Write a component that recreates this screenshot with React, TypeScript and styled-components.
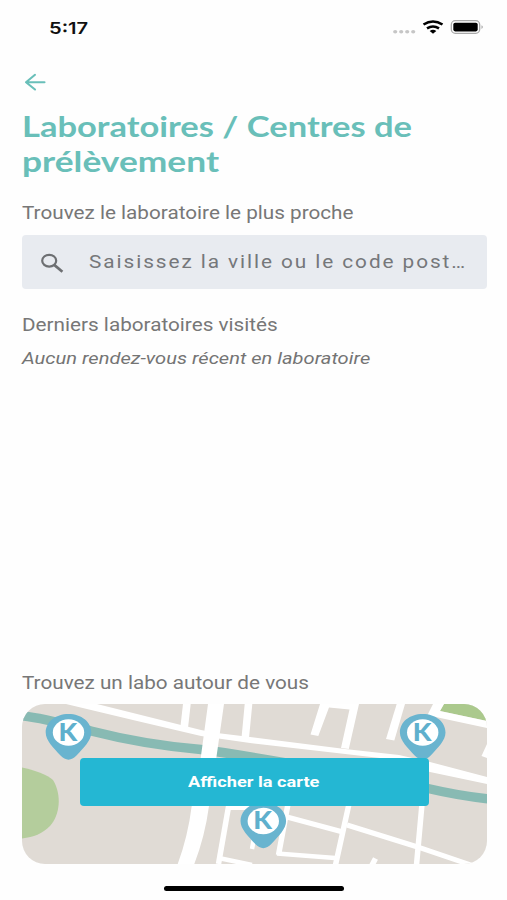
import React from "react";
import styled, { createGlobalStyle } from "styled-components";

const GlobalStyle = createGlobalStyle`
  * { box-sizing: border-box; }
  body { margin: 0; background: #fefefe; font-family: Roboto, "Liberation Sans", sans-serif; }
`;

const Screen = styled.main`
  display: flex;
  flex-direction: column;
  width: 507px;
  height: 900px;
  overflow: hidden;
  background: #fefefe;
`;

const StatusBar = styled.header`
  display: flex;
  justify-content: space-between;
  align-items: center;
  height: 54px;
  padding: 0 23px 0 49px;
`;

/* The typeface is rendered wide, by a factor that each text sets. */
const Wide = styled.span<{ $scale: number }>`
  display: block;
  width: max-content;
  white-space: nowrap;
  transform: scaleX(${(p) => p.$scale});
  transform-origin: left center;
`;

const Clock = styled(Wide)`
  padding-top: 1px;
  font: 600 16.5px/20px Inter, sans-serif;
  color: #111;
`;

const StatusIcons = styled.svg`
  display: block;
  width: 92px;
  height: 20px;
`;

const Content = styled.div`
  display: flex;
  flex: 1;
  flex-direction: column;
  padding: 0 20.5px 0 22px;
`;

const BackButton = styled.button`
  display: block;
  width: 26px;
  height: 20px;
  margin: 18px 0 0;
  padding: 0;
  border: 0;
  background: none;
  svg { display: block; }
`;

const Title = styled.h1`
  margin: 17px 0 0;
  font: 700 28px/35px Lato, sans-serif;
  color: #69bfb9;
`;

const Label = styled.p<{ $top?: number }>`
  margin: ${(p) => p.$top ?? 0}px 0 0;
  font-size: 17.5px;
  line-height: 22px;
  color: #777;
`;

const EmptyNote = styled.p`
  margin: 12px 0 0;
  font-size: 16.5px;
  font-style: italic;
  line-height: 22px;
  color: #747474;
`;

const SearchField = styled.div`
  display: flex;
  align-items: center;
  height: 54px;
  margin-top: 11px;
  padding-left: 18px;
  border-radius: 4px;
  background: #e8ebf0;
  color: #75777a;
  font-size: 17.5px;
  line-height: 22px;
  letter-spacing: 1.63px;
  svg { display: block; margin: 2px 25px 0 0; }
`;

const MapSection = styled.section`
  margin-top: auto;
`;

const MapCard = styled.div`
  display: grid;
  width: 464.5px;
  height: 159.5px;
  margin-top: 10px;
  overflow: hidden;
  border-radius: 23px;
  background: #e0dbd5;
  > * { grid-area: 1 / 1; }
`;

const MapDrawing = styled.svg`
  display: block;
  width: 464.5px;
  height: 159.5px;
`;

const MapButton = styled.button`
  display: flex;
  align-items: center;
  z-index: 1;
  width: 348.5px;
  height: 48px;
  margin: 54px 0 0 58px;
  padding: 0 0 0 108px;
  border: 0;
  border-radius: 4px;
  background: #24b7d3;
  color: #fff;
  font: 700 15px/20px Roboto, sans-serif;
`;

const BottomBar = styled.footer`
  display: flex;
  justify-content: center;
  height: 36.5px;
  padding-top: 22.5px;
`;

const HomeIndicator = styled.div`
  width: 180px;
  height: 5px;
  border-radius: 3px;
  background: #000;
`;

function Pin({ x, y }: { x: number; y: number }) {
  return (
    <g transform={`translate(${x} ${y})`}>
      <path
        d="M0 -18.500C13 -18.500 22.800 -10.500 22.800 0C22.800 8 15 15.500 8 23C3 28.500 -3 28.500 -8 23C-15 15.500 -22.800 8 -22.800 0C-22.800 -10.500 -13 -18.500 0 -18.500Z"
        fill="#69b4cf"
      />
      <ellipse rx="15.700" ry="13.200" fill="#fff" />
      <text
        transform="scale(1.1 1)"
        x="-0.600"
        y="8.200"
        textAnchor="middle"
        fontFamily="Lato, sans-serif"
        fontWeight="900"
        fontSize="24.500"
        fill="#5fb0cd"
      >
        K
      </text>
    </g>
  );
}

function CityMap() {
  return (
    <MapDrawing viewBox="22 704 464.5 159.5">
      <path d="M22 767.500C34 770 48 775 53 780C62 795 60 815 50 826C42 834 34 837 22 838.500Z" fill="#b4cd9c" />
      <path d="M440 711L444 704H487V721Z" fill="#abc98d" />
      <path
        d="M20 715.500C45 718 68 725 91 731C130 741 160 746 201 749.500C260 757 350 774 428 788.500Q460 796 490 799"
        fill="none"
        stroke="#88bab3"
        strokeWidth="9.500"
      />
      <g fill="#fff">
        <path d="M66 704H97L201 730L217 733L250 737L345 749L399 755L430 762L487 777V784L430 772L380 758L250 743L201 736L135 720.500Z" />
        <path d="M183 704H190.700L188 728L180.500 726Z" />
        <path d="M208 704H224L216.300 758L209 806Q205 836 194.300 864H177.700Q188 836 191.700 806L200.700 758Z" />
        <path d="M244.700 704H252.300L249 738H241.500Z" />
        <path d="M320 704H359L348.800 749L341 748L349.500 709.500L329 707.500L318.300 736L310.500 734.500Z" />
        <path d="M396.700 704H405L394.300 740.500L386 739Z" />
        <path d="M433 704H444L440 711L487 721V728L431 716L424 722Z" />
        <path d="M487 744L481.500 756L487 758Z" />
      </g>
      <g fill="none" stroke="#fff" strokeWidth="5.500">
        <path d="M229 804L218.500 864" />
        <path d="M229 807.500H252" strokeWidth="5" />
        <path d="M221 858.500L252 865M254 838L252 849M277 853.500L335 858" strokeWidth="4.500" />
        <path d="M288 804L278.500 855M349 804L335.500 865M422 804L416.500 865" />
        <path d="M287 817L341 831.500M347 825L416 846.500L474 866" strokeWidth="5" />
        <path d="M375.500 858.500L371 867" />
      </g>
      <Pin x={68.500} y={732.500} />
      <Pin x={422.700} y={732.500} />
      <Pin x={263.300} y={821} />
    </MapDrawing>
  );
}

export default function App() {
  return (
    <Screen>
      <GlobalStyle />
      <StatusBar>
        <Clock $scale={1.22}>5:17</Clock>
        <StatusIcons viewBox="392 17 92 20">
          <g fill="#c6c6c6">
            <ellipse cx="395.200" cy="31.700" rx="2.100" ry="1.800" />
            <ellipse cx="401.200" cy="31.700" rx="2.100" ry="1.800" />
            <ellipse cx="407.200" cy="31.700" rx="2.100" ry="1.800" />
            <ellipse cx="413.200" cy="31.700" rx="2.100" ry="1.800" />
          </g>
          <g fill="none" stroke="#000" strokeWidth="2.600">
            <path d="M423.500 24.500Q433 18.500 442.500 24.500" />
            <path d="M427 28.300Q433 24.700 439 28.300" />
          </g>
          <path d="M429.700 31Q433 28.600 436.300 31L433 33.700Z" />
          <rect x="451.300" y="20.700" width="28.400" height="12.600" rx="4" fill="#fff" stroke="#a9a9a9" strokeWidth="1.300" />
          <rect x="453.300" y="22.700" width="24.400" height="8.700" rx="1.800" />
          <path d="M481.600 25.300Q483.600 27 481.600 28.900Z" fill="#888" />
        </StatusIcons>
      </StatusBar>
      <Content>
        <BackButton aria-label="Retour">
          <svg width="26" height="20" viewBox="0 0 26 20" fill="none" stroke="#69bfb9" strokeWidth="2.100" strokeLinecap="round" strokeLinejoin="round">
            <path d="M22.500 10.200H4M13 2.800L4 10.200L13 17.500" />
          </svg>
        </BackButton>
        <Title>
          <Wide $scale={1.232}>Laboratoires / Centres de</Wide>
          <Wide $scale={1.262}>prélèvement</Wide>
        </Title>
        <Label $top={23}>
          <Wide $scale={1.183}>Trouvez le laboratoire le plus proche</Wide>
        </Label>
        <SearchField>
          <svg width="24" height="20" viewBox="0 0 24 20" fill="none" stroke="#6d6f72" strokeWidth="2.200">
            <ellipse cx="9.200" cy="7.700" rx="7" ry="5.900" />
            <path d="M14.200 11.900L22.400 18.700" strokeWidth="2.700" />
          </svg>
          <Wide $scale={1.187}>Saisissez la ville ou le code post…</Wide>
        </SearchField>
        <Label $top={25}>
          <Wide $scale={1.183}>Derniers laboratoires visités</Wide>
        </Label>
        <EmptyNote>
          <Wide $scale={1.217}>Aucun rendez-vous récent en laboratoire</Wide>
        </EmptyNote>
        <MapSection>
          <Label>
            <Wide $scale={1.183}>Trouvez un labo autour de vous</Wide>
          </Label>
          <MapCard>
            <CityMap />
            <MapButton>
              <Wide $scale={1.215}>Afficher la carte</Wide>
            </MapButton>
          </MapCard>
        </MapSection>
      </Content>
      <BottomBar>
        <HomeIndicator />
      </BottomBar>
    </Screen>
  );
}
